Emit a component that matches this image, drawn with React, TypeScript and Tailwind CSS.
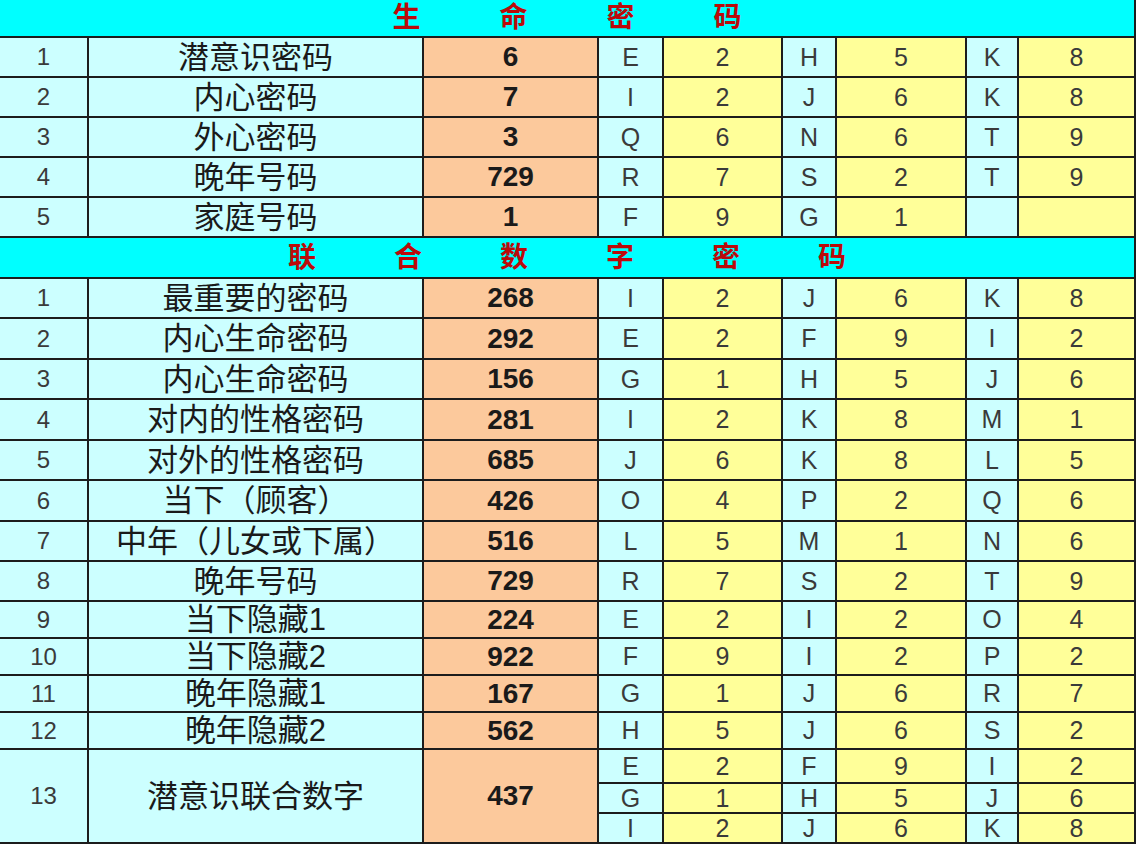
import React from 'react';

type Row = {
    no: number;
    label: string;
    code: string;
    pairs: string[][];
};

const LIFE: Row[] = [
    { no: 1, label: '潜意识密码', code: '6', pairs: [['E', '2', 'H', '5', 'K', '8']] },
    { no: 2, label: '内心密码', code: '7', pairs: [['I', '2', 'J', '6', 'K', '8']] },
    { no: 3, label: '外心密码', code: '3', pairs: [['Q', '6', 'N', '6', 'T', '9']] },
    { no: 4, label: '晚年号码', code: '729', pairs: [['R', '7', 'S', '2', 'T', '9']] },
    { no: 5, label: '家庭号码', code: '1', pairs: [['F', '9', 'G', '1', '', '']] },
];

const COMBINED: Row[] = [
    { no: 1, label: '最重要的密码', code: '268', pairs: [['I', '2', 'J', '6', 'K', '8']] },
    { no: 2, label: '内心生命密码', code: '292', pairs: [['E', '2', 'F', '9', 'I', '2']] },
    { no: 3, label: '内心生命密码', code: '156', pairs: [['G', '1', 'H', '5', 'J', '6']] },
    { no: 4, label: '对内的性格密码', code: '281', pairs: [['I', '2', 'K', '8', 'M', '1']] },
    { no: 5, label: '对外的性格密码', code: '685', pairs: [['J', '6', 'K', '8', 'L', '5']] },
    { no: 6, label: '当下（顾客）', code: '426', pairs: [['O', '4', 'P', '2', 'Q', '6']] },
    { no: 7, label: '中年（儿女或下属）', code: '516', pairs: [['L', '5', 'M', '1', 'N', '6']] },
    { no: 8, label: '晚年号码', code: '729', pairs: [['R', '7', 'S', '2', 'T', '9']] },
    { no: 9, label: '当下隐藏1', code: '224', pairs: [['E', '2', 'I', '2', 'O', '4']] },
    { no: 10, label: '当下隐藏2', code: '922', pairs: [['F', '9', 'I', '2', 'P', '2']] },
    { no: 11, label: '晚年隐藏1', code: '167', pairs: [['G', '1', 'J', '6', 'R', '7']] },
    { no: 12, label: '晚年隐藏2', code: '562', pairs: [['H', '5', 'J', '6', 'S', '2']] },
    {
        no: 13,
        label: '潜意识联合数字',
        code: '437',
        pairs: [
            ['E', '2', 'F', '9', 'I', '2'],
            ['G', '1', 'H', '5', 'J', '6'],
            ['I', '2', 'J', '6', 'K', '8'],
        ],
    },
];

const Title = ({ chars, gap }: { chars: string[]; gap: string }) => (
    <div className={`col-span-full flex items-center justify-center bg-[#00ffff] ${gap}`}>
        {chars.map((c, i) => (
            <span key={i} className="text-[28px] leading-none font-bold text-[#bb0a0a]">
                {c}
            </span>
        ))}
    </div>
);

const DataRows = ({ rows }: { rows: Row[] }) => (
    <>
        {rows.map(row => {
            const span = row.pairs.length === 3 ? 'row-span-3' : '';
            return (
                <React.Fragment key={row.no + row.label}>
                    <div className={`flex items-center justify-center bg-[#ccffff] text-[24px] leading-none text-[#3a3a3a] ${span}`}>
                        {row.no}
                    </div>
                    <div className={`flex items-center justify-center bg-[#ccffff] text-[31px] leading-none text-[#1a1a1a] ${span}`}>
                        {row.label}
                    </div>
                    <div className={`flex items-center justify-center bg-[#fcc99c] text-[28px] font-bold text-[#1a1a1a] ${span}`}>
                        {row.code}
                    </div>
                    {row.pairs.map((p, pi) =>
                        p.map((v, i) => (
                            <div
                                key={pi + '-' + i}
                                className={`flex items-center justify-center text-[25px] leading-none text-[#3a3a3a] ${
                                    i % 2 === 0 ? 'bg-[#ccffff]' : 'bg-[#ffff99]'
                                }`}
                            >
                                {v}
                            </div>
                        ))
                    )}
                </React.Fragment>
            );
        })}
    </>
);

export default function App() {
    return (
        <div className="w-[1136px] h-[844px] overflow-hidden bg-white font-['Liberation_Sans','Noto_Sans_CJK_SC',sans-serif]">
            <div className="grid w-[1136px] gap-[2px] bg-[#1c1c1c] pr-[2px] pb-[2px] grid-cols-[87px_333px_173px_63px_117px_52px_128px_50px_115px] grid-rows-[36px_repeat(5,38px)_39px_38px_39px_38px_39px_38px_39px_38px_38px_repeat(4,35px)_32px_28px_28px]">
                <Title chars={['生', '命', '密', '码']} gap="gap-[79px]" />
                <DataRows rows={LIFE} />
                <Title chars={['联', '合', '数', '字', '密', '码']} gap="gap-[78px]" />
                <DataRows rows={COMBINED} />
            </div>
        </div>
    );
}
